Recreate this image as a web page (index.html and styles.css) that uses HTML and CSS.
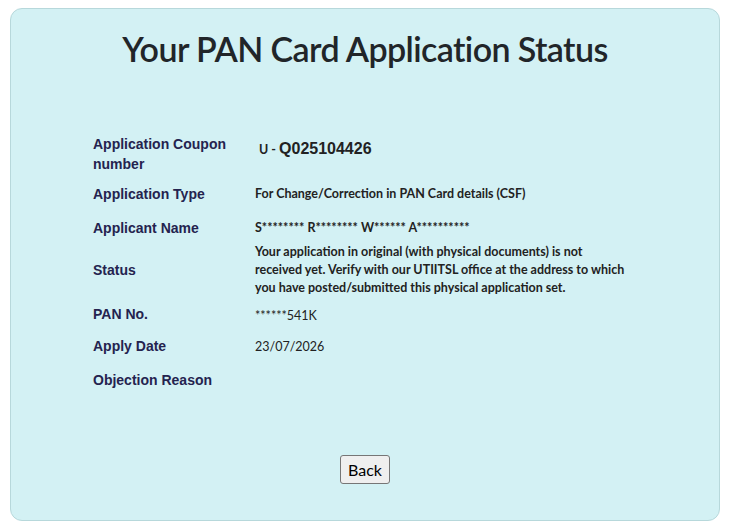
FILE: index.html
```html
<!DOCTYPE html>
<html lang="en">
<head>
<meta charset="utf-8">
<title>Your PAN Card Application Status</title>
<link rel="stylesheet" href="styles.css">
</head>
<body>
<div class="page">
  <div class="card">
    <h1 class="title">Your PAN Card Application Status</h1>
    <div class="details">
      <div class="label r1">Application Coupon number</div>
      <div class="value coupon r1"><span class="prefix">U - </span><span class="code">Q025104426</span></div>

      <div class="label r2">Application Type</div>
      <div class="value strong r2">For Change/Correction in PAN Card details (CSF)</div>

      <div class="label r3">Applicant Name</div>
      <div class="value strong r3">S******** R******** W****** A**********</div>

      <div class="label r4">Status</div>
      <div class="value strong status r4">Your application in original (with physical documents) is not<br>received yet. Verify with our UTIITSL office at the address to which<br>you have posted/submitted this physical application set.</div>

      <div class="label r5">PAN No.</div>
      <div class="value r5">******541K</div>

      <div class="label r6">Apply Date</div>
      <div class="value r6">23/07/2026</div>

      <div class="label r7">Objection Reason</div>
      <div class="value r7"></div>
    </div>
    <div class="actions">
      <button class="back" type="button">Back</button>
    </div>
  </div>
</div>
</body>
</html>
```
FILE: styles.css
```css
html, body {
  margin: 0;
  padding: 0;
  background: #ffffff;
}

.page {
  padding: 8px 12px 10px 10px;
}

.card {
  box-sizing: border-box;
  width: 710px;
  height: 513px;
  border: 1px solid #b7d8db;
  border-radius: 12px;
  background: #d3f1f4;
  padding: 20px 0 0 82px;
  display: flex;
  flex-direction: column;
}

.title {
  margin: 0 82px 0 0;
  font-family: "Lato", "Open Sans", sans-serif;
  font-weight: 600;
  font-size: 34px;
  line-height: 40px;
  letter-spacing: -0.6px;
  color: #212529;
  text-align: center;
}

.details {
  margin-top: 61px;
  display: grid;
  grid-template-columns: 162px 390px;
  grid-template-rows: 47px 33px 35px 49px 40px 23px 45px;
  align-items: center;
}

.label {
  font-family: "Liberation Sans", Arial, sans-serif;
  font-weight: bold;
  font-size: 14px;
  line-height: 20px;
  color: #24234f;
  padding-right: 20px;
}

.value {
  font-family: "Lato", "Open Sans", sans-serif;
  font-size: 12.5px;
  line-height: 18px;
  color: #222222;
}

.value.strong {
  font-weight: bold;
}

.value.r5,
.value.r6 {
  padding-top: 3px;
}

.coupon {
  align-self: start;
  padding-top: 10px;
  padding-left: 4px;
  font-weight: bold;
}

.coupon .prefix {
  font-size: 12.5px;
}

.coupon .code {
  font-family: "Liberation Sans", Arial, sans-serif;
  font-size: 16px;
}

.actions {
  margin: 53px 82px 0 0;
  display: flex;
  justify-content: center;
}

.back {
  height: 29px;
  padding: 0 7px;
  font-family: "Lato", "Open Sans", sans-serif;
  font-size: 16px;
  color: #000000;
  background: #efefef;
  border: 1px solid #767676;
  border-radius: 3px;
}
```
